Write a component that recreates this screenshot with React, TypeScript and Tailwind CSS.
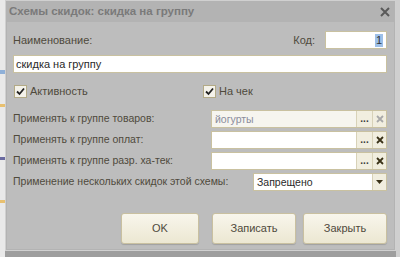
import React from 'react';

const font = { fontFamily: '"Liberation Sans", Arial, sans-serif' };

const Check: React.FC<{ label: string }> = ({ label }) => (
  <div className="flex items-center gap-[3px]">
    <div className="w-[13px] h-[13px] border border-[#b3aa86] bg-[#f4f2ea] flex items-center justify-center">
      <svg width="9" height="9" viewBox="0 0 9 9">
        <path d="M1 4.5 L3.5 7 L8 1.5" stroke="#222" strokeWidth="1.8" fill="none" />
      </svg>
    </div>
    <span className="text-[11px] text-[#4f4a3c]">{label}</span>
  </div>
);

const Dots = () => (
  <div className="w-[16px] h-full border-l border-[#d8d2b8] bg-[#f1eedf] flex items-end justify-center pb-[3px]">
    <span className="text-[10px] leading-none text-[#3a3a3a] font-bold">...</span>
  </div>
);

const Clear: React.FC<{ dim?: boolean }> = ({ dim }) => (
  <div className="w-[14px] h-full border-l border-[#d8d2b8] bg-[#f1eedf] flex items-center justify-center">
    <svg width="8" height="8" viewBox="0 0 8 8">
      <path d="M1 1 L7 7 M7 1 L1 7" stroke={dim ? '#a8a8a8' : '#3a3218'} strokeWidth="1.8" />
    </svg>
  </div>
);

const PickRow: React.FC<{ label: string; value?: string; dim?: boolean }> = ({ label, value, dim }) => (
  <div className="flex items-center h-[18px]">
    <span className="w-[198px] text-[10.5px] text-[#4f4a3c]">{label}</span>
    <div className={`flex-1 h-[18px] border border-[#c9c1a0] flex ${dim ? 'bg-[#f6f5ef]' : 'bg-white'}`}>
      <div className="flex-1 text-[10.5px] text-[#8a8c9c] pl-[3px] leading-[16px]">{value}</div>
      <Dots />
      <Clear dim={dim} />
    </div>
  </div>
);

const Btn: React.FC<{ label: string; w: string }> = ({ label, w }) => (
  <div className={`${w} h-[31px] rounded-[3px] border border-[#c9c0a0] bg-gradient-to-b from-[#f8f6ec] to-[#ece7d2] shadow-[0_1px_1px_rgba(0,0,0,0.15)] flex items-center justify-center text-[11px] text-[#4f4a3c]`}>
    {label}
  </div>
);

export default function App() {
  return (
    <div style={font} className="w-[400px] h-[257px] flex bg-[#9e9e9e] overflow-hidden">
      <div className="w-[5px] h-full flex flex-col bg-[#e9e9e9]">
        <div className="h-[70px]" />
        <div className="h-[4px] bg-[#8fb0d8]" />
        <div className="h-[30px]" />
        <div className="h-[3px] bg-[#e8c070]" />
        <div className="h-[50px]" />
        <div className="h-[3px] bg-[#6a6aa0]" />
        <div className="h-[40px]" />
        <div className="h-[3px] bg-[#e8c070]" />
      </div>
      <div className="w-[391px] h-[251px] border border-[#d0d0d0] bg-[#b3b3b3] flex flex-col">
        <div className="h-[21px] flex items-center justify-between pl-[3px] pr-[5px]">
          <span className="text-[11.5px] font-bold text-[#7a7a7a]">Схемы скидок: скидка на группу</span>
          <svg width="10" height="10" viewBox="0 0 10 10">
            <path d="M1 1 L9 9 M9 1 L1 9" stroke="#5a5a5a" strokeWidth="2" />
          </svg>
        </div>
        <div className="flex-1 bg-[#bdbdbd] mx-[1px] mb-[1px] pl-[6px] pr-[7px] pt-[9px] flex flex-col">
          <div className="flex items-center h-[18px]">
            <span className="flex-1 text-[11px] text-[#4f4a3c]">Наименование:</span>
            <span className="text-[11px] text-[#4f4a3c] mr-[10px]">Код:</span>
            <div className="w-[62px] h-[18px] border border-[#c9c1a0] bg-white flex justify-end items-center pr-[3px]">
              <span className="text-[11px] leading-[13px] bg-[#9ec0e8] text-[#333] px-[1px]">1</span>
            </div>
          </div>
          <div className="mt-[6px] h-[18px] border border-[#c9c1a0] bg-white text-[11px] text-[#2a2a2a] pl-[2px] leading-[16px]">
            скидка на группу
          </div>
          <div className="mt-[10px] flex">
            <div className="w-[190px] pl-[1px]"><Check label="Активность" /></div>
            <Check label="На чек" />
          </div>
          <div className="mt-[10px] flex flex-col gap-[3px]">
            <PickRow label="Применять к группе товаров:" value="йогурты" dim />
            <PickRow label="Применять к группе оплат:" />
            <PickRow label="Применять к группе разр. ха-тек:" />
            <div className="flex items-center h-[18px]">
              <span className="w-[240px] whitespace-nowrap text-[10.5px] text-[#4f4a3c]">Применение нескольких скидок этой схемы:</span>
              <div className="flex-1 h-[18px] border border-[#c9c1a0] bg-white flex">
                <div className="flex-1 text-[10.5px] text-[#2a2a2a] pl-[3px] leading-[16px]">Запрещено</div>
                <div className="w-[14px] h-full border-l border-[#d8d2b8] bg-[#f1eedf] flex items-center justify-center">
                  <svg width="7" height="4" viewBox="0 0 7 4"><path d="M0 0 L7 0 L3.5 4 Z" fill="#3a3218" /></svg>
                </div>
              </div>
            </div>
          </div>
          <div className="mt-[22px] flex justify-end">
            <Btn label="OK" w="w-[78px]" />
            <div className="w-[13px]" />
            <Btn label="Записать" w="w-[84px]" />
            <div className="w-[7px]" />
            <Btn label="Закрыть" w="w-[84px]" />
          </div>
        </div>
      </div>
      <div className="flex-1 bg-[#cfcfcf]" />
    </div>
  );
}
